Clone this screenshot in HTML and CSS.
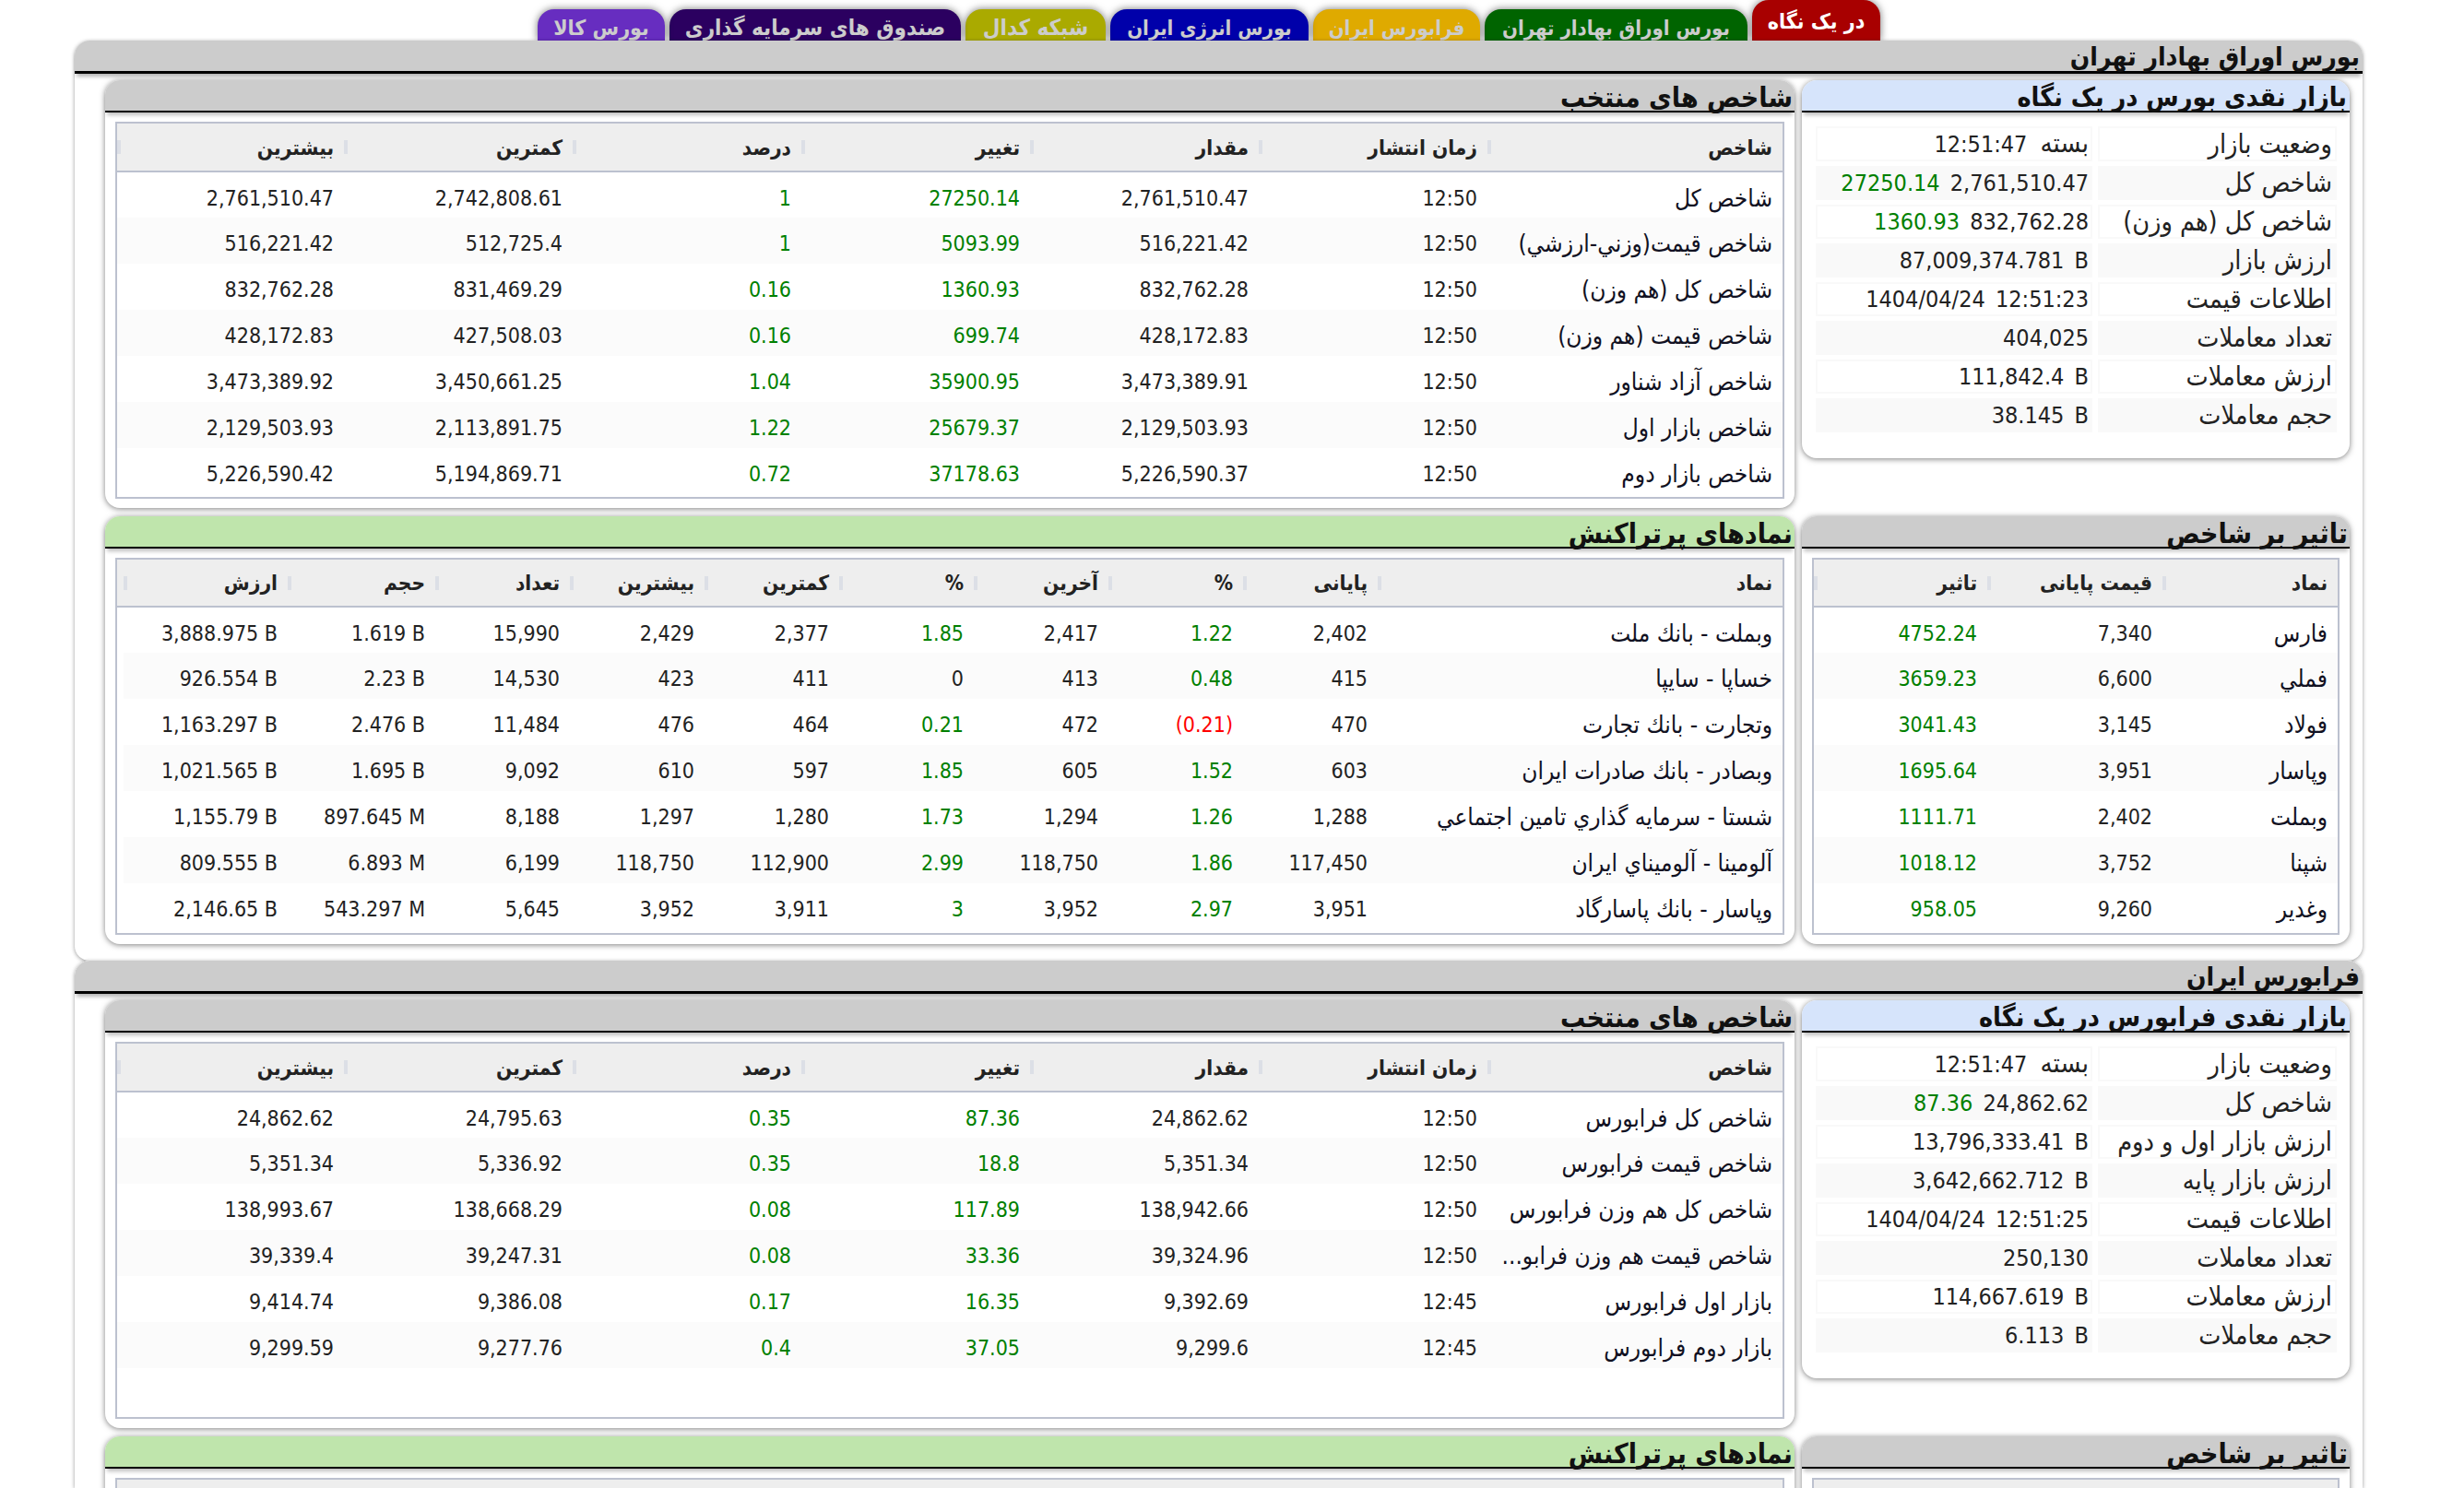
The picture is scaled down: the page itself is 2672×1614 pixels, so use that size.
FILE: index.html
```html
<!DOCTYPE html>
<html lang="fa" dir="rtl">
<head>
<meta charset="utf-8">
<title>بورس اوراق بهادار تهران</title>
<link rel="stylesheet" href="styles.css">
</head>
<body>
<nav class="tabs">
  <a class="tab tab-glance">در یک نگاه</a>
  <a class="tab tab-tse">بورس اوراق بهادار تهران</a>
  <a class="tab tab-ifb">فرابورس ایران</a>
  <a class="tab tab-energy">بورس انرژی ایران</a>
  <a class="tab tab-codal">شبکه کدال</a>
  <a class="tab tab-funds">صندوق های سرمایه گذاری</a>
  <a class="tab tab-commodity">بورس کالا</a>
</nav>

<section class="market">
  <h1 class="market-title">بورس اوراق بهادار تهران</h1>
  <div class="market-grid">
    <div class="card info-card">
      <h2 class="card-title blue">بازار نقدی بورس در یک نگاه</h2>
      <table class="info">
        <tr><td>وضعیت بازار</td><td><span class="fa">بسته</span> 12:51:47</td></tr>
        <tr><td>شاخص کل</td><td>2,761,510.47 <span class="up">27250.14</span></td></tr>
        <tr><td>شاخص کل (هم وزن)</td><td>832,762.28 <span class="up">1360.93</span></td></tr>
        <tr><td>ارزش بازار</td><td><bdi>87,009,374.781 B</bdi></td></tr>
        <tr><td>اطلاعات قیمت</td><td>12:51:23 1404/04/24</td></tr>
        <tr><td>تعداد معاملات</td><td>404,025</td></tr>
        <tr><td>ارزش معاملات</td><td><bdi>111,842.4 B</bdi></td></tr>
        <tr><td>حجم معاملات</td><td><bdi>38.145 B</bdi></td></tr>
      </table>
    </div>
    <div class="card">
      <h2 class="card-title">شاخص های منتخب</h2>
      <div class="grid-wrap">
        <table class="grid indices">
          <colgroup><col class="c320"><col class="c248"><col class="c248"><col class="c248"><col class="c248"><col class="c248"><col></colgroup>
          <thead><tr><th>شاخص</th><th>زمان انتشار</th><th>مقدار</th><th>تغییر</th><th>درصد</th><th>کمترین</th><th>بیشترین</th></tr></thead>
          <tbody>
            <tr><td>شاخص کل</td><td>12:50</td><td class="n">2,761,510.47</td><td class="n up">27250.14</td><td class="n up">1</td><td class="n">2,742,808.61</td><td class="n">2,761,510.47</td></tr>
            <tr><td>شاخص قیمت(وزني-ارزشي)</td><td>12:50</td><td class="n">516,221.42</td><td class="n up">5093.99</td><td class="n up">1</td><td class="n">512,725.4</td><td class="n">516,221.42</td></tr>
            <tr><td>شاخص کل (هم وزن)</td><td>12:50</td><td class="n">832,762.28</td><td class="n up">1360.93</td><td class="n up">0.16</td><td class="n">831,469.29</td><td class="n">832,762.28</td></tr>
            <tr><td>شاخص قیمت (هم وزن)</td><td>12:50</td><td class="n">428,172.83</td><td class="n up">699.74</td><td class="n up">0.16</td><td class="n">427,508.03</td><td class="n">428,172.83</td></tr>
            <tr><td>شاخص آزاد شناور</td><td>12:50</td><td class="n">3,473,389.91</td><td class="n up">35900.95</td><td class="n up">1.04</td><td class="n">3,450,661.25</td><td class="n">3,473,389.92</td></tr>
            <tr><td>شاخص بازار اول</td><td>12:50</td><td class="n">2,129,503.93</td><td class="n up">25679.37</td><td class="n up">1.22</td><td class="n">2,113,891.75</td><td class="n">2,129,503.93</td></tr>
            <tr><td>شاخص بازار دوم</td><td>12:50</td><td class="n">5,226,590.37</td><td class="n up">37178.63</td><td class="n up">0.72</td><td class="n">5,194,869.71</td><td class="n">5,226,590.42</td></tr>
          </tbody>
        </table>
      </div>
    </div>
    <div class="card">
      <h2 class="card-title">تاثیر بر شاخص</h2>
      <div class="grid-wrap">
        <table class="grid impact">
          <colgroup><col class="c190"><col class="c190"><col></colgroup>
          <thead><tr><th>نماد</th><th>قیمت پایانی</th><th>تاثیر</th></tr></thead>
          <tbody>
            <tr><td>فارس</td><td class="n">7,340</td><td class="n up">4752.24</td></tr>
            <tr><td>فملي</td><td class="n">6,600</td><td class="n up">3659.23</td></tr>
            <tr><td>فولاد</td><td class="n">3,145</td><td class="n up">3041.43</td></tr>
            <tr><td>وپاسار</td><td class="n">3,951</td><td class="n up">1695.64</td></tr>
            <tr><td>وبملت</td><td class="n">2,402</td><td class="n up">1111.71</td></tr>
            <tr><td>شپنا</td><td class="n">3,752</td><td class="n up">1018.12</td></tr>
            <tr><td>وغدير</td><td class="n">9,260</td><td class="n up">958.05</td></tr>
          </tbody>
        </table>
      </div>
    </div>
    <div class="card">
      <h2 class="card-title green">نمادهای پرتراکنش</h2>
      <div class="grid-wrap">
        <table class="grid active">
          <colgroup><col class="c439"><col class="c146"><col class="c146"><col class="c146"><col class="c146"><col class="c146"><col class="c146"><col class="c146"><col class="c160"><col class="c178"><col></colgroup>
          <thead><tr><th>نماد</th><th>پایانی</th><th>%</th><th>آخرین</th><th>%</th><th>کمترین</th><th>بیشترین</th><th>تعداد</th><th>حجم</th><th>ارزش</th><th class="gutter"></th></tr></thead>
          <tbody>
            <tr><td>وبملت - بانك ملت</td><td class="n">2,402</td><td class="n up">1.22</td><td class="n">2,417</td><td class="n up">1.85</td><td class="n">2,377</td><td class="n">2,429</td><td class="n">15,990</td><td class="n">1.619 B</td><td class="n">3,888.975 B</td><td class="gutter"></td></tr>
            <tr><td>خساپا - سايپا</td><td class="n">415</td><td class="n up">0.48</td><td class="n">413</td><td class="n">0</td><td class="n">411</td><td class="n">423</td><td class="n">14,530</td><td class="n">2.23 B</td><td class="n">926.554 B</td><td class="gutter"></td></tr>
            <tr><td>وتجارت - بانك تجارت</td><td class="n">470</td><td class="n down">(0.21)</td><td class="n">472</td><td class="n up">0.21</td><td class="n">464</td><td class="n">476</td><td class="n">11,484</td><td class="n">2.476 B</td><td class="n">1,163.297 B</td><td class="gutter"></td></tr>
            <tr><td>وبصادر - بانك صادرات ايران</td><td class="n">603</td><td class="n up">1.52</td><td class="n">605</td><td class="n up">1.85</td><td class="n">597</td><td class="n">610</td><td class="n">9,092</td><td class="n">1.695 B</td><td class="n">1,021.565 B</td><td class="gutter"></td></tr>
            <tr><td>شستا - سرمايه گذاري تامين اجتماعي</td><td class="n">1,288</td><td class="n up">1.26</td><td class="n">1,294</td><td class="n up">1.73</td><td class="n">1,280</td><td class="n">1,297</td><td class="n">8,188</td><td class="n">897.645 M</td><td class="n">1,155.79 B</td><td class="gutter"></td></tr>
            <tr><td>آلومينا - آلوميناي ايران</td><td class="n">117,450</td><td class="n up">1.86</td><td class="n">118,750</td><td class="n up">2.99</td><td class="n">112,900</td><td class="n">118,750</td><td class="n">6,199</td><td class="n">6.893 M</td><td class="n">809.555 B</td><td class="gutter"></td></tr>
            <tr><td>وپاسار - بانك پاسارگاد</td><td class="n">3,951</td><td class="n up">2.97</td><td class="n">3,952</td><td class="n up">3</td><td class="n">3,911</td><td class="n">3,952</td><td class="n">5,645</td><td class="n">543.297 M</td><td class="n">2,146.65 B</td><td class="gutter"></td></tr>
          </tbody>
        </table>
      </div>
    </div>
  </div>
</section>

<section class="market market-cut">
  <h1 class="market-title">فرابورس ایران</h1>
  <div class="market-grid">
    <div class="card info-card">
      <h2 class="card-title blue">بازار نقدی فرابورس در یک نگاه</h2>
      <table class="info">
        <tr><td>وضعیت بازار</td><td><span class="fa">بسته</span> 12:51:47</td></tr>
        <tr><td>شاخص کل</td><td>24,862.62 <span class="up">87.36</span></td></tr>
        <tr><td>ارزش بازار اول و دوم</td><td><bdi>13,796,333.41 B</bdi></td></tr>
        <tr><td>ارزش بازار پایه</td><td><bdi>3,642,662.712 B</bdi></td></tr>
        <tr><td>اطلاعات قیمت</td><td>12:51:25 1404/04/24</td></tr>
        <tr><td>تعداد معاملات</td><td>250,130</td></tr>
        <tr><td>ارزش معاملات</td><td><bdi>114,667.619 B</bdi></td></tr>
        <tr><td>حجم معاملات</td><td><bdi>6.113 B</bdi></td></tr>
      </table>
    </div>
    <div class="card">
      <h2 class="card-title">شاخص های منتخب</h2>
      <div class="grid-wrap">
        <table class="grid indices">
          <colgroup><col class="c320"><col class="c248"><col class="c248"><col class="c248"><col class="c248"><col class="c248"><col></colgroup>
          <thead><tr><th>شاخص</th><th>زمان انتشار</th><th>مقدار</th><th>تغییر</th><th>درصد</th><th>کمترین</th><th>بیشترین</th></tr></thead>
          <tbody>
            <tr><td>شاخص کل فرابورس</td><td>12:50</td><td class="n">24,862.62</td><td class="n up">87.36</td><td class="n up">0.35</td><td class="n">24,795.63</td><td class="n">24,862.62</td></tr>
            <tr><td>شاخص قیمت فرابورس</td><td>12:50</td><td class="n">5,351.34</td><td class="n up">18.8</td><td class="n up">0.35</td><td class="n">5,336.92</td><td class="n">5,351.34</td></tr>
            <tr><td>شاخص کل هم وزن فرابورس</td><td>12:50</td><td class="n">138,942.66</td><td class="n up">117.89</td><td class="n up">0.08</td><td class="n">138,668.29</td><td class="n">138,993.67</td></tr>
            <tr><td>شاخص قیمت هم وزن فرابو...</td><td>12:50</td><td class="n">39,324.96</td><td class="n up">33.36</td><td class="n up">0.08</td><td class="n">39,247.31</td><td class="n">39,339.4</td></tr>
            <tr><td>بازار اول فرابورس</td><td>12:45</td><td class="n">9,392.69</td><td class="n up">16.35</td><td class="n up">0.17</td><td class="n">9,386.08</td><td class="n">9,414.74</td></tr>
            <tr><td>بازار دوم فرابورس</td><td>12:45</td><td class="n">9,299.6</td><td class="n up">37.05</td><td class="n up">0.4</td><td class="n">9,277.76</td><td class="n">9,299.59</td></tr>
          </tbody>
        </table>
      </div>
    </div>
    <div class="card">
      <h2 class="card-title">تاثیر بر شاخص</h2>
      <div class="grid-wrap"><div class="head-band"></div></div>
    </div>
    <div class="card">
      <h2 class="card-title green">نمادهای پرتراکنش</h2>
      <div class="grid-wrap"><div class="head-band"></div></div>
    </div>
  </div>
</section>
</body>
</html>
```
FILE: styles.css
```css
html, body { margin: 0; height: 1614px; overflow: hidden; background: #fff; }
body {
  padding: 0 110px 0 81px;
  box-sizing: border-box;
  font-family: "DejaVu Sans Condensed", "DejaVu Sans", sans-serif;
  font-size: 23px;
  color: #222;
}

.tabs { display: flex; gap: 5px; height: 44px; padding-right: 523px; align-items: flex-end; }
.tab {
  box-sizing: border-box;
  height: 34px;
  overflow: hidden;
  border-radius: 18px 18px 0 0;
  box-shadow: 0 0 9px rgba(0,0,0,.55);
  color: #ccc;
  font-weight: bold;
  font-size: 22px;
  line-height: 41px;
  text-align: center;
  white-space: nowrap;
}
.tab-glance { width: 139px; height: 44px; line-height: 46px; font-size: 23px; color: #fff; background: #a80000; }
.tab-tse { width: 285px; background: #006400; }
.tab-ifb { width: 181px; background: #dfaa00; }
.tab-energy { width: 215px; background: #0000aa; }
.tab-codal { width: 152px; font-size: 24px; background: #aaaa00; }
.tab-funds { width: 316px; font-size: 24px; background: #2b0060; }
.tab-commodity { width: 138px; font-size: 23px; background: #672dc0; }

.market {
  position: relative;
  height: 998px;
  box-sizing: border-box;
  background: #fff;
  border-radius: 16px;
  box-shadow: 0 1px 4px rgba(0,0,0,.4);
}
.market-cut {
  height: 572px;
  overflow: hidden;
  border-radius: 16px 16px 0 0;
}
.market-title {
  margin: 0;
  box-sizing: border-box;
  height: 36px;
  padding: 0 3px;
  background: #ccc;
  border-bottom: 3px solid #000;
  border-radius: 16px 16px 0 0;
  box-shadow: 0 5px 4px -2px rgba(0,0,0,.3);
  font-size: 28px;
  line-height: 36px;
  color: #111;
  white-space: nowrap;
}
.market-grid {
  display: grid;
  grid-template-columns: 594px 1832px;
  grid-template-rows: 464px 464px;
  gap: 9px 8px;
  padding: 7px 14px 0 33px;
  align-items: stretch;
}

.card {
  display: flex;
  flex-direction: column;
  background: #fff;
  border-radius: 16px;
  box-shadow: 0 1px 6px rgba(0,0,0,.5);
}
.info-card { align-self: start; height: 410px; }
.card-title {
  margin: 0;
  box-sizing: border-box;
  flex: none;
  height: 35px;
  padding: 0 2px;
  background: #ccc;
  border-bottom: 2px solid #000;
  border-radius: 16px 16px 0 0;
  box-shadow: 0 5px 4px -2px rgba(0,0,0,.25);
  font-size: 30px;
  line-height: 38px;
  color: #111;
  white-space: nowrap;
}
.card-title.blue { background: #d6e4fb; font-size: 28.5px; padding-right: 3px; }
.card-title.green { background: #bfe5ac; }

.info {
  border-collapse: separate;
  border-spacing: 6px 5px;
  margin: 10px 8px 0 9px;
  width: 577px;
  table-layout: fixed;
  font-size: 25px;
}
.info td {
  box-sizing: border-box;
  height: 37px;
  padding: 0 2px;
  border: 2px solid #f9f9f9;
  white-space: nowrap;
  line-height: 33px;
  word-spacing: 4px;
}
.info td:first-child { width: 259px; padding-right: 3px; font-size: 28.5px; word-spacing: 0; }
.info tr:nth-child(even) td { background: #f9f9f9; }
.info .fa { font-size: 29px; margin-left: 3px; }
bdi { direction: ltr; }

.grid-wrap {
  flex: 1;
  margin: 10px 11px;
  border: 2px solid #bcc1cf;
  min-height: 0;
}
.head-band { height: 51px; background: #eee; }
.grid {
  width: 100%;
  table-layout: fixed;
  border-collapse: collapse;
}
.c320 { width: 320px; }
.c248 { width: 248px; }
.c190 { width: 190px; }
.c439 { width: 439px; }
.c146 { width: 146px; }
.c160 { width: 160px; }
.c178 { width: 178px; }

.grid th {
  position: relative;
  height: 51px;
  padding: 0 11px 0 0;
  background: #eee;
  border-bottom: 2px solid #bcc1cf;
  font-size: 22.5px;
  color: #222;
  text-align: right;
  white-space: nowrap;
}
.impact th, .active th { height: 50px; }
.grid th:not(:first-child)::after,
.grid th:last-child::before {
  content: "";
  position: absolute;
  top: 18px;
  width: 4px;
  height: 15px;
  background: #dcdfe6;
}
.grid th:not(:first-child)::after { right: -4px; }
.grid th:last-child::before { left: 0; }
.grid th.gutter::before { display: none; }
.grid td {
  height: 50px;
  padding: 6px 11px 0 0;
  box-sizing: border-box;
  text-align: right;
  white-space: nowrap;
}
.grid td:first-child { font-size: 26px; color: #112; }
.grid tbody tr:nth-child(even) td:not(.gutter) { background: #fbfbfb; }
.grid .gutter { padding: 0; }
.grid .n { direction: ltr; text-align: right; }
.up { color: #008000; }
.down { color: #f00; }
```
